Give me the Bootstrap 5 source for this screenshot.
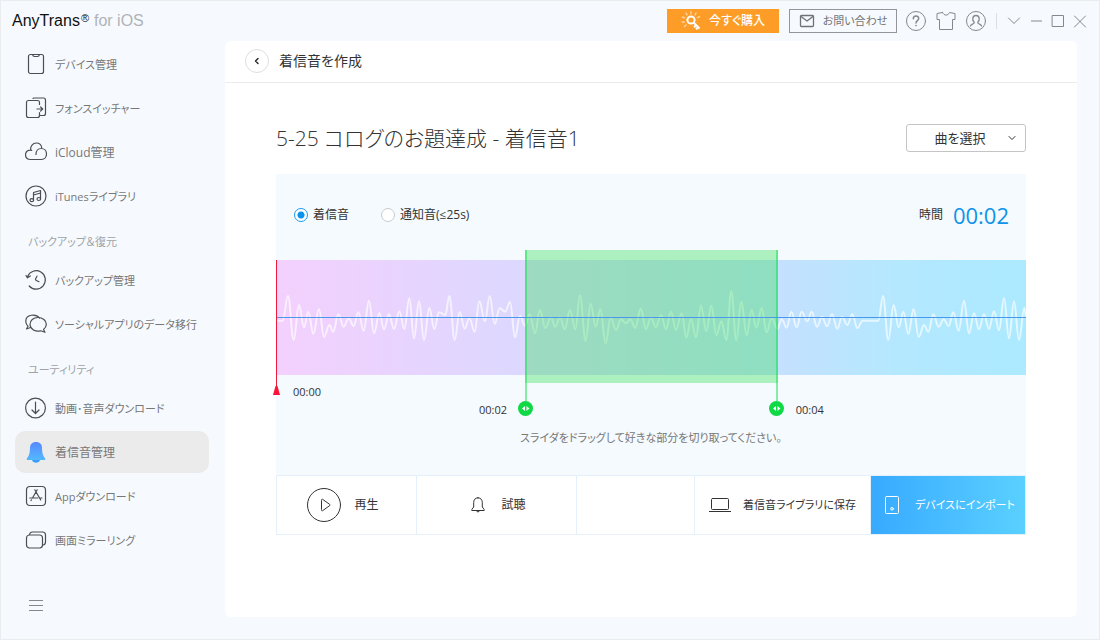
<!DOCTYPE html>
<html lang="ja">
<head>
<meta charset="utf-8">
<meta name="viewport" content="width=device-width, initial-scale=1">
<title>AnyTrans for iOS</title>
<link href="https://cdn.jsdelivr.net/npm/bootstrap@5.3.0/dist/css/bootstrap.min.css" rel="stylesheet">
<style>
  body {
    font-family: "Open Sans", "Noto Sans CJK JP", sans-serif;
    font-size: 12px; line-height: 18px; color: #333;
    font-feature-settings: "palt";
    background: #f6fafe; border: 1px solid #ebecee;
  }
  button, select { font-feature-settings: inherit; font-family: inherit; }
  svg { display: block; flex: none; }
  .ico { fill: none; stroke: currentColor; stroke-linecap: round; stroke-linejoin: round; }
  a { color: inherit; text-decoration: none; }
  .kana { font-size: 11px; }

  .titlebar { height: 40px; padding: 0 12px 0 11px; }
  .brand { font: 16px/20px "Liberation Sans", sans-serif; color: #111; }
  .brand sup { font-size: 11px; top: -4px; margin-left: 1px; }
  .brand-sub { color: #b0b3b6; margin-left: 5px; }
  .btn-buy, .btn-contact { height: 24px; border-radius: 0; border: 1px solid; font-size: 12px; line-height: 16px; padding: 0 8px; white-space: nowrap; }
  .btn-buy { width: 112px; background: #fd9d28; border-color: #fd9d28; color: #fff; font-weight: 500; margin-right: 2px; }
  .btn-contact { width: 108px; background: transparent; border-color: #939699; color: #707376; }
  .bar-btn { border: 0; background: none; padding: 0; color: #85888b; }
  .rule { width: 1px; height: 16px; background: #dcdfe2; margin: 0 1px; }

  .sidebar { width: 224px; padding: 2px 16px 26px 14px; }
  .side-nav { gap: 2px; }
  .side-link { height: 42px; padding-left: 10px; gap: 8px; color: #777; border-radius: 10px; white-space: nowrap; }
  .side-link span { padding-top: 2px; }
  .side-link svg { color: #4c4e50; }
  .side-link.active { background: #ebebeb; }
  .side-label { height: 38px; padding: 7px 0 0 13px; color: #a0a3a6; }
  .menu-btn { margin: 0 0 0 14px; }

  .panel { background: #fff; border-radius: 6px; margin: 0 22px 22px 0; min-width: 0; }
  .panel-head { height: 42px; padding: 0 20px 2px; gap: 10px; border-bottom: 1px solid #ececec; font-size: 14px; }
  .back { width: 24px; height: 24px; border: 1px solid #dedede; border-radius: 50%; background: #fff; padding: 0; color: #222; }
  .panel-body { padding: 40px 51px; }
  .song { font-size: 21px; line-height: 30px; font-weight: 300; color: #333; }
  .pick { width: 120px; }
  .pick select { width: 100%; height: 28px; appearance: none; border: 1px solid #c4c4c4; border-radius: 3px; background: #fff; color: #333; font-size: 13px; padding: 0 24px 0 12px; text-align: center; text-align-last: center; }
  .pick svg { position: absolute; right: 9px; top: 10px; pointer-events: none; }

  .editor { background: #f4fafe; margin-top: 21px; padding-bottom: 28px; }
  .editor-top { height: 86px; padding: 0 17px 4px 18px; }
  .kind { gap: 5px; }
  .kind input { appearance: none; width: 14px; height: 14px; margin: 0; border: 1px solid #c8cbce; border-radius: 50%; background: #fff; }
  .kind input:checked { border-color: #1c9bf0; background: radial-gradient(circle, #0a93ee 3px, #fff 4px); }
  .time-box { gap: 10px; }
  .clock { font-size: 22px; line-height: 28px; color: #0d94e8; }

  .track { height: 115px; background: linear-gradient(90deg, #f4d0fd 0%, #dcd8ff 33%, #c5e0ff 66%, #b4e8ff 83%, #aceaff 100%); }
  .track .wave { width: 100%; height: 115px; }
  .wave path { fill: none; stroke: #fff; stroke-opacity: .65; stroke-width: 2px; vector-effect: non-scaling-stroke; stroke-linejoin: round; }
  .axis { position: absolute; left: 0; right: 0; top: 57px; height: 1px; background: #4a98ea; }
  .clip { position: absolute; top: -10px; height: 133px; background: rgba(46, 221, 83, .36); }
  .clip-grip { position: absolute; top: 0; width: 2px; height: 151px; background: rgba(22, 219, 80, .5); }
  .clip-grip.from { left: 0; } .clip-grip.to { right: 0; }
  .clip-grip svg { position: absolute; left: -7px; bottom: -15px; }
  .clip-time { position: absolute; top: 151px; font-size: 11px; }
  .clip-time.from { right: 100%; margin-right: 18px; } .clip-time.to { left: 100%; margin-left: 18px; }
  .playhead { position: absolute; left: 0; top: 0; width: 1px; height: 128px; background: #ec1c3c; }
  .playhead svg { position: absolute; left: -3px; top: 126px; }
  .play-time { position: absolute; left: 17px; top: 123px; font-size: 11px; }
  .hint { margin-top: 54px; color: #777; }

  .actions { display: grid; grid-template-columns: 140fr 160fr 118fr 176fr 154fr; border: 1px solid #e5f0fa; height: 60px; }
  .action { border: 0; border-right: 1px solid #e5f0fa; background: #fff; color: #333; padding: 0; white-space: nowrap; }
  .action.send { border: 0; background: linear-gradient(90deg, #38aaff, #5ad0ff); color: #fff; }
</style>
</head>
<body class="min-vh-100 d-flex flex-column">

<header class="titlebar d-flex align-items-center justify-content-between">
  <div class="brand">AnyTrans<sup>®</sup><span class="brand-sub">for iOS</span></div>
  <div class="d-flex align-items-center gap-2">
    <button class="btn-buy d-flex align-items-center justify-content-center gap-2">
      <svg class="ico" width="20" height="20" viewBox="0 0 20 20" stroke-width="2"><circle cx="10" cy="9" r="3.6"/><path d="M12.8 11.8l5.700 5.700M15 14.200l-2 2M17 16.200l-2 2" stroke-linecap="butt"/><g stroke-width="1.400" opacity=".6"><path d="M10 .8v2M5 2l1 1.800M15 2l-1 1.800M1.500 6l2 .8M18.500 5.600l-2 1M1.200 11h2M3.500 15.500l1.600-1.600"/></g></svg>
      今すぐ購入
    </button>
    <button class="btn-contact d-flex align-items-center justify-content-center gap-2">
      <svg class="ico" width="16" height="14" viewBox="0 0 16 14" stroke-width="1.300"><rect x="1.500" y="1.500" width="13" height="11" rx="1"/><path d="M2 2.500l6 4.500 6-4.500"/></svg>
      <span class="kana">お問い合わせ</span>
    </button>
    <button class="bar-btn" aria-label="ヘルプ"><svg class="ico" width="22" height="22" viewBox="0 0 22 22"><circle cx="11" cy="11" r="9.500"/><path d="M8.300 8.800c0-3.600 5.400-3.600 5.400-.3 0 2-2.700 2.300-2.700 4.500" stroke-width="1.500"/><circle cx="11" cy="15.600" r=".5" stroke-width=".8"/></svg></button>
    <button class="bar-btn" aria-label="スキン"><svg class="ico" width="22" height="22" viewBox="0 0 22 22"><path d="M7.500 2.500L2 3.500v6h2.500v10h13v-10H20v-6l-5.500-1C13 6 9 6 7.500 2.500z"/></svg></button>
    <button class="bar-btn" aria-label="アカウント"><svg class="ico" width="22" height="22" viewBox="0 0 22 22"><circle cx="11" cy="11" r="9.500"/><path d="M5.500 16c0-2 4-1.800 3.800-3.600C6.800 10 7.300 5.500 11 5.500s4.200 4.500 1.700 6.900c-.2 1.800 3.800 1.600 3.800 3.600" stroke-width="1.300"/></svg></button>
    <span class="rule"></span>
    <button class="bar-btn" aria-label="メニュー"><svg class="ico" width="16" height="16" viewBox="0 0 16 16"><path d="M2.500 5L8 10.500 13.500 5"/></svg></button>
    <button class="bar-btn" aria-label="最小化"><svg class="ico" width="13" height="16" viewBox="0 0 13 16"><path d="M1 8h11" stroke-width="2" opacity=".5" stroke-linecap="butt"/></svg></button>
    <button class="bar-btn" aria-label="最大化"><svg class="ico" width="14" height="16" viewBox="0 0 14 16"><path d="M1.500 2.500h11v11h-11z" stroke-linejoin="miter"/></svg></button>
    <button class="bar-btn" aria-label="閉じる"><svg class="ico" width="14" height="16" viewBox="0 0 14 16"><path d="M1.500 3l11 11M12.500 3l-11 11"/></svg></button>
  </div>
</header>

<div class="d-flex flex-grow-1">
  <aside class="sidebar d-flex flex-column flex-shrink-0 justify-content-between">
    <nav class="side-nav d-flex flex-column">
      <a href="#" class="side-link d-flex align-items-center"><svg class="ico" width="22" height="22" viewBox="0 0 22 22" stroke-width="1.200"><rect x="3.500" y="1.500" width="15" height="19" rx="2"/><path d="M7.500 1.500c.5 2 1 2 2 2h3c1 0 1.500 0 2-2"/></svg><span class="kana">デバイス管理</span></a>
      <a href="#" class="side-link d-flex align-items-center"><svg class="ico" width="22" height="22" viewBox="0 0 22 22" stroke-width="1.200"><path d="M14.500 7.500V5.500a2 2 0 0 0-2-2h-9a2 2 0 0 0-2 2v13a2 2 0 0 0 2 2h9a2 2 0 0 0 2-2v-3M8 1.500c0-.5.500-.5 1-.5h9.500a2 2 0 0 1 2 2v13.500a2 2 0 0 1-2 2h-4M12 12h5.500M15.500 9.800l2.200 2.200-2.200 2.200"/></svg><span class="kana">フォンスイッチャー</span></a>
      <a href="#" class="side-link d-flex align-items-center"><svg class="ico" width="22" height="22" viewBox="0 0 22 22" stroke-width="1.200"><path d="M5.800 9.200C5 5 8 2 11.300 2c3 0 5.200 2 5.500 5.200M11 13.500c0-3.500 2-6 5.200-6 2.800 0 5.300 2 5.300 5.500 0 3-2 5.500-5 5.500H5.500c-3 0-5-2-5-4.700 0-3.300 2.700-5.300 6.200-4.500"/></svg><span>iCloud管理</span></a>
      <a href="#" class="side-link d-flex align-items-center"><svg class="ico" width="22" height="22" viewBox="0 0 22 22" stroke-width="1.200"><circle cx="11" cy="11" r="10"/><path d="M8.500 15.500V7.500L15.500 5.500V14M8.500 10L15.500 8"/><ellipse cx="6.800" cy="15.200" rx="1.800" ry="1.500"/><ellipse cx="13.800" cy="14" rx="1.800" ry="1.500"/></svg><span class="kana">iTunesライブラリ</span></a>
      <div class="side-label d-flex align-items-center kana">バックアップ＆復元</div>
      <a href="#" class="side-link d-flex align-items-center"><svg class="ico" width="22" height="22" viewBox="0 0 22 22" stroke-width="1.200"><path d="M2.600 7.500A9.200 9.200 0 1 1 4.200 17M1 6.500l1.500 2.300L5.300 7M12 7c-.2 1-1.500 2.500-1.500 3.500s2 1.500 3.500 2.200"/></svg><span class="kana">バックアップ管理</span></a>
      <a href="#" class="side-link d-flex align-items-center"><svg class="ico" width="22" height="22" viewBox="0 0 22 22" stroke-width="1.200"><path d="M14.500 5C11 .5.500 1 .8 8.500c.1 2 1 3.700 2.200 4.800L1.500 16l4-1.500"/><path d="M13 4.500c4.700 0 8.300 3 8.300 6.700 0 2.300-1 4-2.800 5.300l1.500 2.800-4.500-1.500c-5 1.200-10.300-1.500-10.500-6.300C4.800 7.500 8.500 4.500 13 4.500z"/></svg><span class="kana">ソーシャルアプリのデータ移行</span></a>
      <div class="side-label d-flex align-items-center kana">ユーティリティ</div>
      <a href="#" class="side-link d-flex align-items-center"><svg class="ico" width="22" height="22" viewBox="0 0 22 22" stroke-width="1.200"><circle cx="10.500" cy="11" r="9.900"/><path d="M10.500 5v11.500M7 13l3.500 3.500L14 13"/></svg><span class="kana">動画･音声ダウンロード</span></a>
      <a href="#" class="side-link d-flex align-items-center active" aria-current="page"><svg width="22" height="22" viewBox="0 0 22 22"><defs><linearGradient id="bell" x1="0" y1="0" x2="0" y2="1"><stop offset="0" stop-color="#5689ff"/><stop offset="1" stop-color="#54b9ff"/></linearGradient></defs><path d="M11 1C7 1 5 3.500 5 7c0 5-1 8-3.200 10.500V19h18.400v-1.500C18 15 17 12 17 7c0-3.500-2-6-6-6z" fill="url(#bell)"/><path d="M7 19h8c-.8 3.600-7.200 3.600-8 0z" fill="#399ffa"/></svg><span>着信音管理</span></a>
      <a href="#" class="side-link d-flex align-items-center"><svg class="ico" width="22" height="22" viewBox="0 0 22 22" stroke-width="1.200"><rect x="1.500" y="1.500" width="19" height="19" rx="3.500"/><path d="M9.800 4.800L15.700 15M12.200 4.800L7.500 13M4.800 13h8M15 13h2M6.500 14.800l-.5.700"/></svg><span class="kana">Appダウンロード</span></a>
      <a href="#" class="side-link d-flex align-items-center"><svg class="ico" width="22" height="22" viewBox="0 0 22 22" stroke-width="1.200"><rect x="1.500" y="6" width="16" height="13" rx="3"/><path d="M4.500 5.500c.3-1.500 1.500-2.500 3-2.500h10a3 3 0 0 1 3 3v7c0 1.500-1 2.800-2.500 3"/></svg><span class="kana">画面ミラーリング</span></a>
    </nav>
    <button class="bar-btn menu-btn align-self-start" aria-label="その他"><svg class="ico" width="14" height="14" viewBox="0 0 14 14"><path d="M0 1.500h14M0 6.500h14M0 11.500h14" stroke-linecap="butt"/></svg></button>
  </aside>

  <main class="panel flex-grow-1">
    <div class="panel-head d-flex align-items-center">
      <button class="back d-flex align-items-center justify-content-center" aria-label="戻る"><svg class="ico" width="8" height="8" viewBox="0 0 8 8" stroke-width="1.400"><path d="M5 1.500L2.500 4 5 6.500"/></svg></button>
      着信音を作成
    </div>
    <div class="panel-body">
      <div class="d-flex align-items-center justify-content-between">
        <h1 class="song m-0">5-25 コログのお題達成 - 着信音1</h1>
        <div class="pick position-relative">
          <select aria-label="曲を選択"><option>曲を選択</option></select>
          <svg class="ico" width="10" height="8" viewBox="0 0 10 8" stroke="#555"><path d="M2 2.500l3 3 3-3"/></svg>
        </div>
      </div>

      <section class="editor">
        <div class="editor-top d-flex align-items-center justify-content-between">
          <div class="d-flex gap-4">
            <div class="kind d-flex align-items-center me-2"><input type="radio" name="kind" id="ring" checked><label for="ring">着信音</label></div>
            <div class="kind d-flex align-items-center"><input type="radio" name="kind" id="alert"><label for="alert">通知音(≤25s)</label></div>
          </div>
          <div class="time-box d-flex align-items-center"><span>時間</span><span class="clock">00:02</span></div>
        </div>
        <div class="track position-relative">
          <svg class="wave" viewBox="0 0 2250 345" preserveAspectRatio="none"><path id="wave"/></svg>
          <div class="clip" style="left:33.2%;width:33.7%">
            <span class="clip-time from">00:02</span>
            <span class="clip-time to">00:04</span>
            <span class="clip-grip from"><svg width="15" height="15" viewBox="0 0 15 15"><circle cx="7.500" cy="7.500" r="7.500" fill="#0fd944"/><path d="M7 5v5L4 7.500zM8.500 5v5l3-2.500z" fill="#fff"/></svg></span>
            <span class="clip-grip to"><svg width="15" height="15" viewBox="0 0 15 15"><circle cx="7.500" cy="7.500" r="7.500" fill="#0fd944"/><path d="M7 5v5L4 7.500zM8.500 5v5l3-2.500z" fill="#fff"/></svg></span>
          </div>
          <div class="axis"></div>
          <div class="playhead"><svg width="7" height="9" viewBox="0 0 7 9"><path d="M2.500 0h2L7 9H0z" fill="#ff1239"/></svg></div>
          <span class="play-time">00:00</span>
        </div>
        <p class="hint kana text-center mb-0">スライダをドラッグして好きな部分を切り取ってください。</p>
      </section>

      <div class="actions">
        <button class="action d-flex align-items-center justify-content-center gap-2 pe-2">
          <svg class="ico me-1" width="36" height="36" viewBox="0 0 36 36" stroke="#444"><circle cx="18" cy="18" r="16.500"/><path d="M15.500 13c0-.8.500-1 1.200-.6l7 5c.5.400.5.800 0 1.200l-7 5c-.7.400-1.200.2-1.200-.6z"/></svg>再生</button>
        <button class="action d-flex align-items-center justify-content-center gap-3 ps-1">
          <svg class="ico" width="14" height="16" viewBox="0 0 14 16"><path d="M7 .8C4 .8 2.700 3 2.700 5.500V10L.8 12.500v1h12.400v-1L11.300 10V5.500C11.300 3 10 .8 7 .8zM5.500 14c.3 1.300 2.700 1.300 3 0"/></svg>試聴</button>
        <div class="action"></div>
        <button class="action d-flex align-items-center justify-content-center gap-2">
          <svg class="ico me-1" width="22" height="16" viewBox="0 0 22 16" stroke="#111"><rect x="2.500" y="1.500" width="17" height="11" rx="1"/><path d="M0 14.500h22" stroke-linecap="butt"/></svg><span class="kana">着信音ライブラリに保存</span></button>
        <button class="action send d-flex align-items-center justify-content-center gap-3 ps-1">
          <svg class="ico" width="14" height="18" viewBox="0 0 14 18"><rect x=".5" y=".5" width="13" height="17" rx="1"/><circle cx="7" cy="12.800" r="1.300"/></svg><span class="kana">デバイスにインポート</span></button>
      </div>
    </div>
  </main>
</div>

<script src="https://cdn.jsdelivr.net/npm/bootstrap@5.3.0/dist/js/bootstrap.bundle.min.js"></script>
<script>
  // Turning points of the waveform, as x y pairs.
  const peaks = `0 182 20 182 36 108 53 240 69 135 84 202 97 155 112 222 129 147 144 231 160 195 172 215 187 163 203 200 218 175 233 198
    247 157 263 212 279 122 294 220 310 160 324 208 339 163 354 207 370 154 385 207 400 115 414 235 429 124 444 240 460 144 475 207
    489 157 508 165 520 108 536 240 551 156 566 206 580 175 596 215 610 124 627 184 641 108 656 192 671 145 688 155 702 126 717 232
    732 167 747 198 761 162 777 220 792 150 808 205 824 172 838 200 852 172 866 208 882 150 898 208 912 106 929 243 944 132 959 200
    973 148 989 250 1004 172 1020 210 1035 178 1050 190 1063 178 1078 204 1094 146 1110 207 1125 172 1139 202 1155 165 1170 208
    1185 155 1200 210 1217 160 1231 233 1245 178 1260 232 1275 137 1291 214 1306 137 1321 225 1336 184 1351 240 1366 94 1381 240
    1396 125 1412 226 1427 150 1441 203 1457 145 1472 217 1487 173 1504 207 1517 178 1532 203 1546 155 1562 202 1577 155 1594 184
    1607 155 1623 200 1638 170 1653 199 1668 163 1684 206 1698 170 1714 195 1729 163 1744 204 1760 182 1807 182 1821 108 1837 240
    1853 135 1868 202 1882 155 1897 222 1913 147 1928 231 1944 195 1957 215 1972 163 1988 200 2003 178 2018 198 2032 157 2048 212
    2064 122 2079 220 2094 160 2109 208 2124 163 2139 207 2154 154 2169 211 2184 115 2199 235 2214 124 2229 240 2245 144 2250 170`
    .trim().split(/\s+/).map(Number);
  let d = `M${peaks[0]} ${peaks[1]}`;
  for (let i = 2; i < peaks.length; i += 2) {
    const [px, py, x, y] = peaks.slice(i - 2, i + 2);
    const bend = (x - px) * 0.4;
    d += `C${px + bend} ${py} ${x - bend} ${y} ${x} ${y}`;
  }
  document.getElementById('wave').setAttribute('d', d);
</script>
</body>
</html>
